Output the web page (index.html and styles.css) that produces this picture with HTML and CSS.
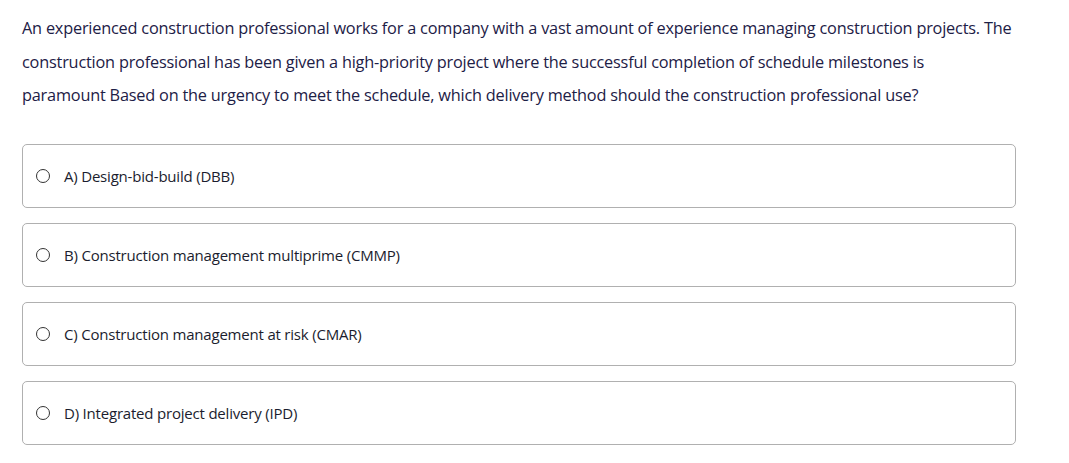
FILE: index.html
```html
<!DOCTYPE html>
<html>
<head>
<meta charset="utf-8">
<link rel="stylesheet" href="styles.css">
</head>
<body>
<div class="page">
  <p class="question">An experienced construction professional works for a company with a vast amount of experience managing construction projects. The<br>construction professional has been given a high-priority project where the successful completion of schedule milestones is<br>paramount Based on the urgency to meet the schedule, which delivery method should the construction professional use?</p>
  <div class="options">
    <label class="option"><span class="radio"></span><span class="label">A) Design-bid-build (DBB)</span></label>
    <label class="option"><span class="radio"></span><span class="label">B) Construction management multiprime (CMMP)</span></label>
    <label class="option"><span class="radio"></span><span class="label">C) Construction management at risk (CMAR)</span></label>
    <label class="option"><span class="radio"></span><span class="label">D) Integrated project delivery (IPD)</span></label>
  </div>
</div>
</body>
</html>
```
FILE: styles.css
```css
html, body {
  margin: 0;
  padding: 0;
  background: #ffffff;
}
body {
  font-family: "Open Sans", "Noto Sans", sans-serif;
  color: #1d2046;
}
.page {
  padding: 12px 53px 0 22px;
}
.question {
  margin: 0;
  font-size: 16.3px;
  font-weight: 500;
  line-height: 33.5px;
  letter-spacing: -0.2px;
  white-space: nowrap;
}
.options {
  display: flex;
  flex-direction: column;
  gap: 15px;
  margin-top: 31px;
}
.option {
  display: flex;
  align-items: center;
  height: 64px;
  border: 1px solid #b0b0b0;
  border-radius: 5px;
  padding-left: 13px;
  box-sizing: border-box;
}
.radio {
  width: 14px;
  height: 14px;
  border: 1px solid #333;
  border-radius: 50%;
  box-sizing: border-box;
  flex: none;
}
.label {
  margin-left: 14px;
  font-size: 15px;
  letter-spacing: -0.2px;
  color: #1b1d2e;
}
```
